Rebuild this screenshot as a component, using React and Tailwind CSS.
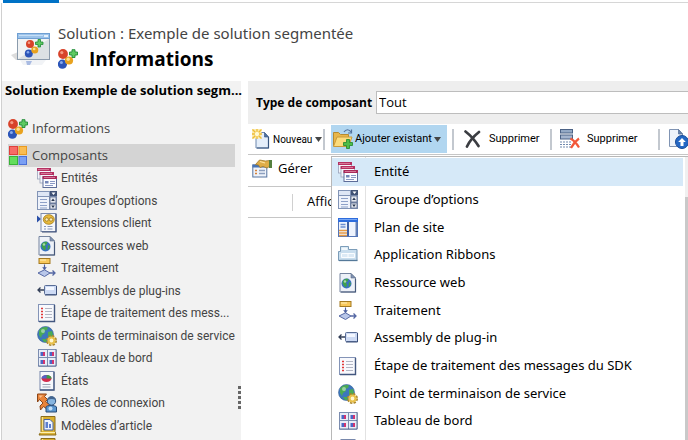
import { useState } from "react";

function Balls({ className }) {
  return (
    <svg viewBox="0 0 20 20" className={className} aria-hidden="true">
      <path d="M5 6 L10.500 12 L4 15" stroke="#a9a9a9" strokeWidth="2" fill="none" />
      <circle cx="5" cy="5" r="4.900" fill="#d8432a" />
      <circle cx="3.800" cy="3.600" r="1.600" fill="#f59a82" />
      <circle cx="4.400" cy="15.200" r="4.600" fill="#2c55b8" />
      <circle cx="3.400" cy="13.600" r="1.500" fill="#86a9ec" />
      <circle cx="11" cy="11.500" r="4.100" fill="#e8a21f" />
      <circle cx="10.200" cy="10.300" r="1.700" fill="#fde08e" />
      <path d="M14 0.700h3v2.300h2.500v3h-2.500v2.500h-3v-2.500h-2.500v-3h2.500z" fill="#5fc962" stroke="#1f8b36" strokeWidth="0.900" />
    </svg>
  );
}

function SolutionIcon({ className }) {
  return (
    <svg viewBox="0 0 40 34" className={className} aria-hidden="true">
      <path d="M0 22 L7 19 V27 H5z" fill="#dcdcdc" />
      <path d="M9 27h26l-4 5H12z" fill="#f1f3f6" />
      <rect x="6.500" y="0.500" width="32" height="26" fill="#f1f3f4" stroke="#8b9bac" />
      <path d="M7 26 L38 6 V26z" fill="#dce1e4" />
      <rect x="6" y="0" width="33" height="6" fill="#6f9fd2" />
      <rect x="7" y="1" width="31" height="4" fill="#9cc3ea" />
      <rect x="8" y="2" width="24" height="1" fill="#c4def7" />
      <rect x="33" y="2" width="4" height="2" fill="#e6f1fc" />
      <path d="M19 12 L24 17 L18 21" stroke="#a0a0a0" strokeWidth="2" fill="none" />
      <circle cx="19" cy="11" r="4" fill="#d8432a" />
      <circle cx="18" cy="9.800" r="1.300" fill="#f59a82" />
      <circle cx="17.800" cy="20.500" r="4" fill="#2c55b8" />
      <circle cx="17" cy="19.300" r="1.300" fill="#86a9ec" />
      <circle cx="23.800" cy="17" r="3.500" fill="#e8a21f" />
      <circle cx="23.200" cy="16" r="1.300" fill="#fde08e" />
      <path d="M27 6.500h2.500v2.500h2.500v2.500h-2.500v2.500h-2.500v-2.500h-2.500v-2.500h2.500z" fill="#5fc962" stroke="#1f8b36" strokeWidth="0.800" />
      <path d="M15 28h6l-2 4h-3z" fill="#a9bbe2" />
    </svg>
  );
}

function Squares() {
  return (
    <svg viewBox="0 0 18 19" className="w-[18px] h-[19px]" aria-hidden="true">
      <rect width="9" height="9" fill="#e0403c" />
      <rect x="1" y="1" width="7" height="7" fill="#f76b66" />
      <rect x="9.500" width="8.500" height="9" fill="#e99a1f" />
      <rect x="10.500" y="1" width="6.500" height="7" fill="#f9bc52" />
      <rect y="10" width="9" height="9" fill="#38b338" />
      <rect x="1" y="11" width="7" height="7" fill="#63dd5c" />
      <rect x="9.500" y="10" width="8.500" height="9" fill="#4a6fd6" />
      <rect x="10.500" y="11" width="6.500" height="7" fill="#7a9ff4" />
    </svg>
  );
}

// 20x20 drawings shared by the navigation tree and the menu
const drawings = {
  entity: (
    <>
      <rect x="0.500" y="1" width="13" height="10" fill="#f4f5fa" stroke="#99a2ba" strokeWidth="0.800" />
      <rect y="0" width="14" height="3" fill="#b53162" />
      <rect x="1" y="1" width="11" height="0.800" fill="#e08aa8" />
      <rect x="3" y="5" width="13.500" height="10" fill="#f4f5fa" stroke="#99a2ba" strokeWidth="0.800" />
      <rect x="2.600" y="4" width="14.400" height="3" fill="#b53162" />
      <rect x="4" y="5" width="11" height="0.800" fill="#e08aa8" />
      <rect x="6" y="9" width="13.500" height="10.500" fill="#fbfcff" stroke="#5d6d99" />
      <rect x="5.500" y="8" width="14.500" height="3" fill="#a92a5a" />
      <rect x="7" y="9" width="11" height="0.800" fill="#e08aa8" />
      <rect x="8" y="13" width="3.500" height="2.500" fill="#7486b8" />
      <path d="M13 13.500h5M13 15.500h5M8 17.500h8" stroke="#8998c4" />
    </>
  ),
  options: (
    <>
      <rect width="20" height="19" fill="#8294b6" />
      <rect x="1" y="1" width="11" height="4" fill="#dfe7f5" />
      <rect x="1" y="6" width="11" height="12" fill="#eff3fb" />
      <rect x="13" y="0" width="7" height="5" fill="#405275" />
      <path d="M14.500 1.500h4l-2 2.500z" fill="#fff" />
      <rect x="13" y="6" width="6" height="6" fill="#e3e7ee" stroke="#5c6d8d" strokeWidth="0.800" />
      <rect x="13" y="13" width="6" height="5" fill="#e3e7ee" stroke="#5c6d8d" strokeWidth="0.800" />
      <path d="M14.200 10h3.600l-1.800-2.500zM14.200 14.500h3.600l-1.800 2.500z" fill="#27364f" />
      <path d="M3 8.500h7M3 11.500h7M3 14.500h7M3 17h7" stroke="#8ea1c8" strokeWidth="1.200" />
    </>
  ),
  client: (
    <>
      <path d="M0 2.500v7l4-3.500z" fill="#2b50a8" />
      <rect x="4" y="0.500" width="15" height="18" fill="#f5f7fb" stroke="#7b8bad" />
      <path d="M19 1v18H5" fill="none" stroke="#3f5079" strokeWidth="1.200" />
      <ellipse cx="11.800" cy="6.500" rx="5.500" ry="4.800" fill="#e7b93c" stroke="#a07a1c" strokeWidth="0.800" />
      <circle cx="9.700" cy="6.500" r="1.700" fill="#fff0b8" stroke="#8c6914" strokeWidth="0.700" />
      <circle cx="14" cy="6.500" r="1.700" fill="#fff0b8" stroke="#8c6914" strokeWidth="0.700" />
      <path d="M7 13.500h2M10.500 13.500h5M7 16h2M10.500 16h5" stroke="#8696bb" strokeWidth="1.200" />
    </>
  ),
  web: (
    <>
      <path d="M2 0.500h11l4.500 4.500v14H2z" fill="#edf1f8" stroke="#7685a0" />
      <path d="M13 0.500v4.500h4.500z" fill="#8193b4" stroke="#5c6b86" strokeWidth="0.600" />
      <path d="M17.500 6v13H3" fill="none" stroke="#46587a" strokeWidth="1.200" />
      <circle cx="8.500" cy="10.500" r="5" fill="#3971c2" />
      <path d="M5 7.500c2-2 4-2 5.500-1.500l-1 2.500-1.500 1 1 2-1 3-2-1.500-1.500-3zM11 9l2 1-1 3-1.500 1z" fill="#40a24b" />
      <circle cx="7" cy="8.500" r="1.200" fill="#a9d8ad" />
    </>
  ),
  process: (
    <>
      <rect x="2" y="0.500" width="11" height="5" fill="#f8c85b" stroke="#a57a21" />
      <path d="M3 2h6" stroke="#fff0bc" />
      <path d="M7.500 6.500v5M5.800 9l1.700 2.500L9.200 9" fill="none" stroke="#4c5f9e" strokeWidth="1.100" />
      <path d="M1 15 L7.500 11.800 L13 15 L7.500 18.500z" fill="#b9c7e9" stroke="#5568a4" />
      <path d="M13 15h5M15.500 12.500L18 15l-2.500 2.500" fill="none" stroke="#5568a4" strokeWidth="1.300" />
    </>
  ),
  assembly: (
    <>
      <path d="M1 9h6M3.500 6.500L1 9l2.500 2.500" fill="none" stroke="#333f58" strokeWidth="1.300" />
      <rect x="7.500" y="4.500" width="12" height="9" rx="1" fill="#cddaf4" stroke="#596d96" />
      <path d="M9 6h8v3H9z" fill="#f3f7ff" />
      <path d="M19.500 5v9H8" fill="none" stroke="#3c507a" />
    </>
  ),
  step: (
    <>
      <rect x="1.500" y="1.500" width="16" height="17" fill="#f8f9fd" stroke="#8494b7" />
      <path d="M17.500 2v16.500H2" fill="none" stroke="#43577f" strokeWidth="1.400" />
      <path d="M4 5.500h2M4 8.500h2M4 11.500h2M4 14.500h2" stroke="#e03838" strokeWidth="1.600" />
      <path d="M8 5.500h7M8 8.500h7M8 11.500h7M8 14.500h7" stroke="#b3b7c4" />
    </>
  ),
  service: (
    <>
      <circle cx="8.500" cy="8.500" r="8" fill="#3c77bd" stroke="#355f94" strokeWidth="0.600" />
      <path d="M2 5c2-4 6-4.500 9-3.500l-1 2.500-3 1 1 2-3 2-1 3-2-3zM11 6l4-1 1 4-2 4-3-3zM5 13l4 0 1 3-3 0z" fill="#4bab54" />
      <circle cx="6" cy="5" r="2" fill="#b9e3c2" opacity="0.700" />
      <circle cx="14.500" cy="14.500" r="4.600" fill="none" stroke="#a8842a" strokeWidth="1.800" strokeDasharray="2.400 1.200" />
      <circle cx="14.500" cy="14.500" r="3" fill="#fff6d0" stroke="#e8c04a" strokeWidth="2.200" />
    </>
  ),
  dashboard: (
    <>
      <rect x="1" y="1" width="18.500" height="17.500" fill="#7c8db0" />
      <path d="M19 1.500V18H1.500" fill="none" stroke="#4b5f8b" />
      <path d="M2 2h8v7H2zM11 2h7.500v7H11zM2 10h8v7.500H2zM11 10h7.500v7.500H11z" fill="#e8edf8" />
      <path d="M3.500 4h2.500v4H3.500zM12.500 4H15v4h-2.500zM3.500 12H6v4H3.500zM12.500 12H15v4h-2.500z" fill="#4a68c4" />
      <path d="M6 4h2v4H6zM15 4h2v4h-2zM6 12h2v4H6zM15 12h2v4h-2z" fill="#d33470" />
    </>
  ),
  report: (
    <>
      <rect x="3" y="0.500" width="14" height="18.500" fill="#f6f8fc" stroke="#7888ac" />
      <path d="M17 1v18H3" fill="none" stroke="#465a81" strokeWidth="1.300" />
      <ellipse cx="9.500" cy="7.500" rx="5" ry="3.400" fill="#d42c4c" />
      <path d="M9.500 7.500V4.100c3 0 5 1.500 5 3.400z" fill="#37a04a" />
      <path d="M4.500 7.500c0-2 2-3.400 5-3.400v3.400z" fill="#5064c8" />
      <path d="M5.500 13.500h8M5.500 16h8" stroke="#9ba4b5" strokeWidth="1.200" />
    </>
  ),
  role: (
    <>
      <path d="M0.500 1h9L7.500 3.500l3 3-2 2 4 3-2 5-4-3-3 3.500L3 13l3-3-3.500-3.500L0.500 9z" fill="#e9843a" stroke="#8d4516" />
      <path d="M2 2.500h4L3 5z" fill="#fbc291" />
      <path d="M9 19v-5c0-2 10-2 10.500 0v5z" fill="#5b96cf" stroke="#274a77" />
      <circle cx="14.500" cy="8" r="4.200" fill="#86b4df" stroke="#2b4d78" />
      <path d="M10.500 7c0-5 8-5 8.300 0-3-1.500-5-1.500-8.300 0z" fill="#43658f" />
      <circle cx="13.500" cy="15.500" r="2" fill="#c2def7" />
    </>
  ),
  article: (
    <>
      <path d="M4 0.500h14v15l1 3.500H2l2-3.500z" fill="#d9ae2e" stroke="#8a6c1c" />
      <path d="M5.500 1v14" stroke="#f8e08c" strokeWidth="1.300" />
      <path d="M7 3.500h6l3 3V14H7z" fill="#eef4ff" stroke="#4763a4" />
      <path d="M8.500 6H11v6H8.500zM12 8h2v4h-2z" fill="#5c7fd0" />
      <path d="M3 16.500h15" stroke="#fff0af" strokeWidth="1.200" />
    </>
  ),
  sitemap: (
    <>
      <rect x="0.500" y="0.500" width="19" height="18" fill="#eef3fd" stroke="#5375b8" />
      <rect width="20" height="4" fill="#2e6cdc" />
      <rect x="1" y="1" width="18" height="1" fill="#78a8f5" />
      <rect x="9" y="4" width="2" height="14" fill="#3f60a4" />
      <rect x="17.500" y="4" width="1.500" height="14" fill="#6681b5" />
      <path d="M2.500 6.500h5M2.500 9h5" stroke="#6b8ed0" strokeWidth="1.300" />
      <path d="M1 12.500h8M1 15h8M1 17.500h8" stroke="#e79b45" strokeWidth="1.400" />
    </>
  ),
  ribbon: (
    <>
      <path d="M0.500 6.500h2v-5h8v3h8.500v11H0.500z" fill="#c9deee" stroke="#7c9db9" />
      <path d="M3.500 5V2.500h6V5z" fill="#f1f8fd" />
      <path d="M3.500 8.500h13v4h-13zM10 8.500v4" fill="#dceaf5" stroke="#fafdff" />
      <path d="M1 15.500h18.500" stroke="#557999" strokeWidth="1.300" />
    </>
  ),
};

function Icon({ name }) {
  return (
    <svg viewBox="0 0 20 20" className="w-[20px] h-[20px] shrink-0" aria-hidden="true">
      {drawings[name]}
    </svg>
  );
}

function NewIcon() {
  return (
    <svg viewBox="0 0 19 20" className="w-[19px] h-[20px] shrink-0" aria-hidden="true">
      <path d="M4 3.500h8.500l4 4.500V19H4z" fill="#e4eefa" stroke="#6d87ad" />
      <path d="M12.500 3.500v4.500h4z" fill="#4e6f9f" stroke="#3f5d8a" strokeWidth="0.700" />
      <path d="M16.500 8v11H5" fill="none" stroke="#36557f" strokeWidth="1.200" />
      <rect x="0" y="0" width="9.500" height="9.500" fill="#fbeab0" />
      <path d="M0.500 0.500l9 9M9.500 0.500l-9 9M5 0v10M0 5h10" stroke="#eebd35" strokeWidth="1.300" />
      <circle cx="5" cy="5" r="2.200" fill="#fff9d4" />
    </svg>
  );
}

function FolderIcon() {
  return (
    <svg viewBox="0 0 20 20" className="w-[20px] h-[20px] shrink-0" aria-hidden="true">
      <path d="M0.500 17V3.500h5l2 2h8V8" fill="#e8b64a" stroke="#b58a30" />
      <path d="M0.500 17.500L4 8h15l-3.500 9.500z" fill="#fbdc7c" stroke="#c99a3a" />
      <path d="M11 3c2-3 5-3 7 0M18.500 0.500V4H15" fill="none" stroke="#50709c" strokeWidth="1.200" />
      <path d="M13.500 10.500h3v3h3v3h-3v3h-3v-3h-3v-3h3z" fill="#4fbd49" stroke="#20872a" strokeWidth="0.800" />
    </svg>
  );
}

function ManageIcon() {
  return (
    <svg viewBox="0 0 20 20" className="w-[20px] h-[20px] shrink-0" aria-hidden="true">
      <rect x="0.800" y="6" width="14" height="12" fill="#eff3fa" stroke="#5674a0" />
      <rect x="0.500" y="5.500" width="14.500" height="3" fill="#4773b5" />
      <path d="M3 11.500h2M3 14.500h2" stroke="#d3813a" strokeWidth="1.600" />
      <path d="M7 11.500h6M7 14.500h6" stroke="#8d9fbe" strokeWidth="1.300" />
      <path d="M3.500 5.500l4-4.500 6 1 4-0.500v6L15 9l-4-1.500-3 1L6.500 6z" fill="#dfad47" stroke="#a07a2c" strokeWidth="0.800" />
      <path d="M8 2.500l5 1.500" stroke="#ffe4a2" strokeWidth="1.200" />
      <path d="M17 1h3v8h-3z" fill="#55803f" />
    </svg>
  );
}

function CrossIcon() {
  return (
    <svg viewBox="0 0 17 18" className="w-[17px] h-[18px] shrink-0" aria-hidden="true">
      <path d="M1.500 1.500C6 5 11 10.500 14.500 16M15 2C10 6 5.500 11 3 16.500" fill="none" stroke="#3b3d42" strokeWidth="2.700" strokeLinecap="round" />
    </svg>
  );
}

function RemoveIcon() {
  return (
    <svg viewBox="0 0 20 20" className="w-[20px] h-[20px] shrink-0" aria-hidden="true">
      <rect x="0.500" y="0.500" width="12" height="3.500" fill="#93a9c5" stroke="#4b6285" />
      <rect x="0.500" y="6" width="12" height="4" fill="#a5b6cf" stroke="#4b6285" />
      <path d="M0 13h12M0 15.500h12M0 18h11" stroke="#7089ae" strokeWidth="1.200" strokeDasharray="2 1" />
      <path d="M10.500 9.500C14 11.500 17 15 19 18.500M19 9.500C15.500 12 13 15 11 19" fill="none" stroke="#f2583a" strokeWidth="2.200" />
    </svg>
  );
}

function UploadIcon() {
  return (
    <svg viewBox="0 0 20 20" className="w-[20px] h-[20px] shrink-0" aria-hidden="true">
      <path d="M0.500 0.500h9l4 4.500v12.500H0.500z" fill="#eef3fa" stroke="#8094b3" />
      <path d="M9.500 0.500V5h4z" fill="#6c86ae" stroke="#516b94" strokeWidth="0.700" />
      <circle cx="13" cy="13" r="6.500" fill="#2467c4" stroke="#174a98" />
      <path d="M13 9l3.800 4h-2.300v4h-3v-4H9.200z" fill="#fff" />
    </svg>
  );
}

function Arrow() {
  return (
    <svg viewBox="0 0 7 5" className="w-[7px] h-[5px] shrink-0 ml-auto" aria-hidden="true">
      <path d="M0 0h7L3.500 5z" fill="#454545" />
    </svg>
  );
}

function Separator({ className }) {
  return <span className={`w-[2px] h-[21px] shrink-0 bg-[#c3c8cf] ${className}`} />;
}

const components = [
  ["entity", "Entités"],
  ["options", "Groupes d’options"],
  ["client", "Extensions client"],
  ["web", "Ressources web"],
  ["process", "Traitement"],
  ["assembly", "Assemblys de plug-ins"],
  ["step", "Étape de traitement des mess..."],
  ["service", "Points de terminaison de service"],
  ["dashboard", "Tableaux de bord"],
  ["report", "États"],
  ["role", "Rôles de connexion"],
  ["article", "Modèles d’article"],
  ["article", ""],
];

const menuItems = [
  ["entity", "Entité"],
  ["options", "Groupe d’options"],
  ["sitemap", "Plan de site"],
  ["ribbon", "Application Ribbons"],
  ["web", "Ressource web"],
  ["process", "Traitement"],
  ["assembly", "Assembly de plug-in"],
  ["step", "Étape de traitement des messages du SDK"],
  ["service", "Point de terminaison de service"],
  ["dashboard", "Tableau de bord"],
  ["report", ""],
];

function Sidebar() {
  return (
    <nav className="relative w-[239px] shrink-0 bg-[#f2f2f2] text-[#444]">
      <h2 className="h-[35px] pl-[3px] text-[13px] leading-[18px] font-bold text-black whitespace-nowrap">
        Solution Exemple de solution segm...
      </h2>
      <a href="#informations" className="flex items-center gap-[4px] h-[26px] pl-[6px] text-[13px]">
        <Balls className="w-[20px] h-[20px]" />
        Informations
      </a>
      <a href="#composants" className="flex items-center gap-[5px] h-[23px] ml-[6px] mr-[6px] mt-[2px] pl-px bg-[#d4d4d4] text-[13px]">
        <Squares />
        Composants
      </a>
      <ul className="font-['Roboto','Open_Sans',sans-serif]">
        {components.map(([icon, label], i) => (
          <li key={i} className="odd:h-[22px] even:h-[23px]">
            <a href={`#composant-${i}`} className="flex items-center gap-[4px] h-full pl-[35px] text-[12px] whitespace-nowrap">
              <Icon name={icon} />
              {label}
            </a>
          </li>
        ))}
      </ul>
      <div className="absolute top-[305px] right-0 w-[3px] h-[24px] bg-[repeating-linear-gradient(#666_0_3px,transparent_3px_5px)]" />
    </nav>
  );
}

function AddMenu() {
  return (
    <div className="absolute top-[32px] left-[83px] right-0 h-screen flex bg-white border-l border-t border-[#b8b8b8] font-['Noto_Sans','Open_Sans',sans-serif]">
      <ul role="menu" className="relative flex-1 pt-px">
        <li className="absolute left-[33px] top-0 h-full w-px bg-[#e2e2e2]" role="presentation" />
        {menuItems.map(([icon, label], i) => (
          <li key={i} role="none" className="relative h-[28px] nth-[3n+1]:h-[27px]">
            <button
              role="menuitem"
              className={`flex items-center gap-[16px] w-full h-full pl-[6px] text-[13px] text-left ${i === 0 ? "bg-[#d6e9f8]" : ""}`}
            >
              <Icon name={icon} />
              {label}
            </button>
          </li>
        ))}
      </ul>
      <div className="w-[3px] ml-[2px] pt-[40px] bg-[#f0f0f0]">
        <div className="h-full bg-[#c9c9c9]" />
      </div>
    </div>
  );
}

export default function App() {
  const [type, setType] = useState("Tout");

  return (
    <div className="h-screen overflow-hidden flex flex-col bg-white font-['Open_Sans','Noto_Sans',sans-serif] text-black">
      <div className="h-[3px] shrink-0 ml-[3px] border-b border-[#d6d6d6]">
        <div className="w-[56px] h-[3px] bg-[#0072c6]" />
      </div>
      <div className="flex-1 min-h-0 flex flex-col ml-px border-l border-[#d0d0d0]">
        <header className="flex items-start h-[78px] shrink-0 pl-[9px] pt-[20px]">
          <SolutionIcon className="w-[40px] h-[44px] pt-[10px]" />
          <div className="pl-[7px]">
            <p className="font-['Noto_Sans','Open_Sans',sans-serif] text-[15px] leading-[20px] text-[#444]">
              Solution : Exemple de solution segmentée
            </p>
            <div className="flex items-center gap-[11px] h-[32px]">
              <Balls className="w-[20px] h-[20px]" />
              <h1 className="text-[19px] leading-[24px] font-bold">Informations</h1>
            </div>
          </div>
        </header>

        <div className="flex-1 min-h-0 flex">
          <Sidebar />
          <main className="flex-1 min-w-0 ml-[7px]">
            <div className="flex items-center gap-[4px] h-[43px] pl-[8px] bg-[#eee]">
              <label htmlFor="type" className="text-[12px] font-bold whitespace-nowrap">Type de composant</label>
              <select
                id="type"
                value={type}
                onChange={(e) => setType(e.target.value)}
                className="appearance-none flex-1 min-w-0 h-[23px] pl-[2px] bg-white border border-r-0 border-[#bdbdbd] text-[13px]"
              >
                <option>Tout</option>
              </select>
            </div>

            <div className="relative flex items-center h-[31px] pl-[4px] border-b border-[#c6c6c6] font-['Roboto','Open_Sans',sans-serif] text-[11px]">
              <button className="flex items-center gap-[2px] w-[70px] shrink-0 text-[10px]">
                <NewIcon />
                Nouveau
                <Arrow />
              </button>
              <Separator className="ml-px" />
              <button className="flex items-center gap-[2px] w-[116px] h-[28px] ml-[6px] pl-[2px] pr-[6px] shrink-0 bg-[#b1d6f0]">
                <FolderIcon />
                Ajouter existant
                <Arrow />
              </button>
              <Separator className="ml-[5px]" />
              <button className="flex items-center gap-[8px] w-[76px] ml-[10px] shrink-0">
                <CrossIcon />
                Supprimer
              </button>
              <Separator className="ml-[10px]" />
              <button className="flex items-center gap-[7px] w-[78px] ml-[8px] shrink-0">
                <RemoveIcon />
                Supprimer
              </button>
              <Separator className="ml-[20px]" />
              <button className="ml-[9px] shrink-0" aria-label="Publier">
                <UploadIcon />
              </button>
              <AddMenu />
            </div>

            <div className="h-[32px] pl-[4px] border-b border-[#c6c6c6]">
              <button className="flex items-center gap-[6px] h-[28px] text-[13px]">
                <ManageIcon />
                Gérer
              </button>
            </div>
            <div className="flex items-center h-[31px] pl-[44px] border-b border-[#c6c6c6] text-[13px]">
              <span className="w-px h-[17px] mr-[14px] bg-[#d0d0d0]" />
              Affichage
            </div>
          </main>
        </div>
      </div>
    </div>
  );
}
